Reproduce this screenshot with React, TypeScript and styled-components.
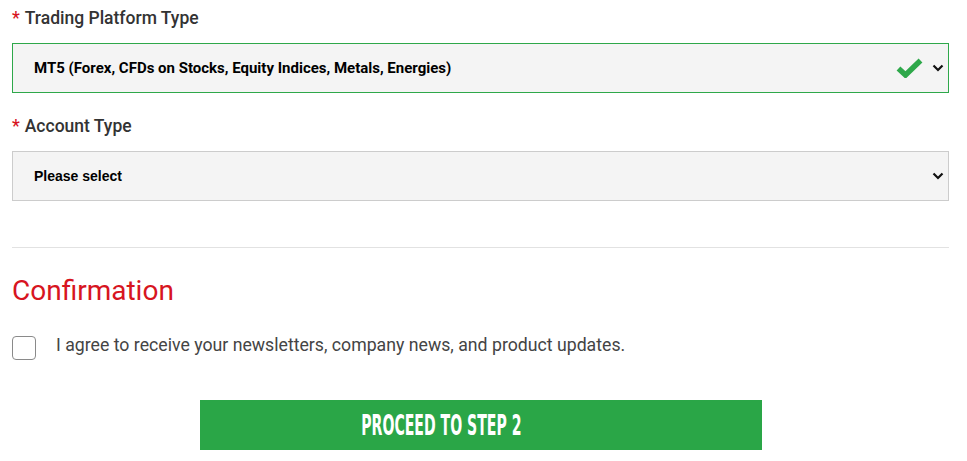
import React from "react";
import styled, { createGlobalStyle } from "styled-components";

const Global = createGlobalStyle`
  html, body { margin: 0; padding: 0; background: #fff; }
  body { font-family: Roboto, "Liberation Sans", sans-serif; }
`;

const Page = styled.div`
  padding: 0 18px 0 12px;
  display: flex;
  flex-direction: column;
`;

const Label = styled.div<{ $top: number }>`
  font-family: Roboto, sans-serif;
  font-weight: 500;
  font-size: 17.5px;
  color: #333;
  line-height: 20px;
  margin-top: ${(p) => p.$top}px;
  display: flex;
  gap: 5px;
`;

const Star = styled.span`
  color: #d7151f;
`;

const SelectBox = styled.div<{ $valid?: boolean; $arial?: boolean }>`
  margin-top: 15px;
  box-sizing: border-box;
  height: 50px;
  border: 1px solid ${(p) => (p.$valid ? "#2ea84a" : "#cccccc")};
  background: #f4f4f4;
  display: flex;
  align-items: center;
  padding: 0 4px 0 21px;
  font-family: ${(p) => (p.$arial ? `"Liberation Sans", Arial, sans-serif` : `Roboto, sans-serif`)};
  font-weight: 700;
  font-size: ${(p) => (p.$arial ? 14 : 15)}px;
  color: #000;
`;

const SelectText = styled.span`
  flex: 1;
`;

const Icons = styled.span`
  display: flex;
  align-items: center;
  gap: 9px;
`;

const Divider = styled.hr`
  border: 0;
  border-top: 1px solid #e2e2e2;
  margin: 46px 0 0;
`;

const Heading = styled.h2`
  margin: 26px 0 0;
  font-family: Roboto, sans-serif;
  font-weight: 400;
  font-size: 28px;
  line-height: 34px;
  color: #d7151f;
`;

const CheckRow = styled.label`
  margin-top: 22px;
  display: flex;
  align-items: center;
  gap: 20px;
  font-family: Roboto, sans-serif;
  font-size: 17.7px;
  color: #444;
`;

const Box = styled.span`
  width: 22px;
  height: 22px;
  border: 1px solid #8a8a8a;
  border-radius: 4px;
  background: #fff;
  display: inline-block;
  margin-top: 6px;
`;

const ButtonRow = styled.div`
  display: flex;
  justify-content: center;
  margin-top: 40px;
`;

const Button = styled.button`
  width: 562px;
  height: 50px;
  border: 0;
  background: #2aa647;
  color: #fff;
  cursor: pointer;
  display: flex;
  align-items: center;
  justify-content: center;
  padding: 0 78px 0 0;
`;

const ButtonText = styled.span`
  font-family: "DejaVu Sans Condensed", "DejaVu Sans", sans-serif;
  font-stretch: condensed;
  font-weight: 700;
  font-size: 29px;
  display: inline-block;
  transform: scaleX(0.54);
  white-space: nowrap;
`;

const Chevron = () => (
  <svg width="12" height="8" viewBox="0 0 12 8">
    <path d="M1.5 1.5 L6 6 L10.5 1.5" fill="none" stroke="#111" strokeWidth="2.2" />
  </svg>
);

const Check = () => (
  <svg width="27" height="20" viewBox="0 0 27 20">
    <path d="M2.5 10.5 L9.5 17 L24.5 2.5" fill="none" stroke="#2ea84a" strokeWidth="5.5" />
  </svg>
);

export default function App() {
  return (
    <>
      <Global />
      <Page>
        <Label $top={8}>
          <Star>*</Star>Trading Platform Type
        </Label>
        <SelectBox $valid>
          <SelectText>MT5 (Forex, CFDs on Stocks, Equity Indices, Metals, Energies)</SelectText>
          <Icons>
            <Check />
            <Chevron />
          </Icons>
        </SelectBox>
        <Label $top={23}>
          <Star>*</Star>Account Type
        </Label>
        <SelectBox $arial>
          <SelectText>Please select</SelectText>
          <Chevron />
        </SelectBox>
        <Divider />
        <Heading>Confirmation</Heading>
        <CheckRow>
          <Box />
          I agree to receive your newsletters, company news, and product updates.
        </CheckRow>
        <ButtonRow>
          <Button>
            <ButtonText>PROCEED TO STEP 2</ButtonText>
          </Button>
        </ButtonRow>
      </Page>
    </>
  );
}
